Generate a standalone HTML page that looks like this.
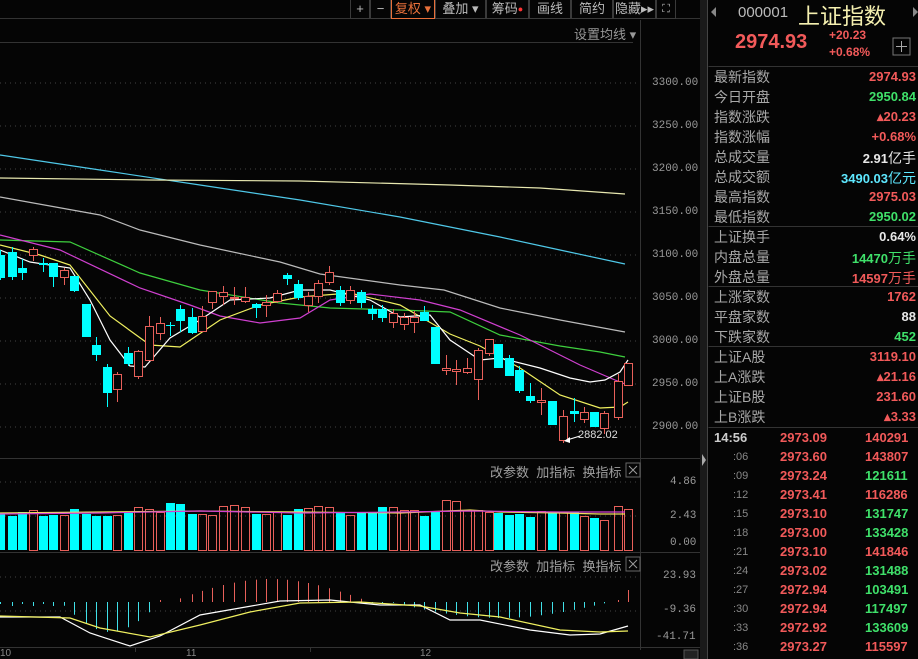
<!DOCTYPE html>
<html><head><meta charset="utf-8"><style>
*{margin:0;padding:0;box-sizing:border-box}
body{width:918px;height:659px;background:#050505;overflow:hidden;position:relative;font-family:"Liberation Sans","Noto Sans CJK SC",sans-serif;color:#aaa}
.a{position:absolute;white-space:nowrap}
.tb{position:absolute;top:0;height:19px;border:1px solid #3a3a3a;border-top:none;font-size:13px;line-height:18px;text-align:center;color:#bbb}
.lbl{position:absolute;left:714px;font-size:14px;color:#a8a8a8}
.val{position:absolute;right:2px;font-size:13px;font-weight:bold}
.r{color:#f25a5a}.g{color:#3fe06a}.w{color:#e8e8e8}
.ax{position:absolute;left:652px;font-size:11px;color:#9a9a9a;font-family:"Liberation Mono",monospace}
.ph{position:absolute;font-size:13px;color:#a0a0a0}
.tk{position:absolute;font-size:13px;font-weight:bold}
</style></head><body>
<svg class="a" style="left:0;top:0" width="918" height="659" id="s">
<g stroke="#444" stroke-dasharray="1,4" stroke-width="1">
<line x1="0" y1="83" x2="640" y2="83"/><line x1="0" y1="126" x2="640" y2="126"/><line x1="0" y1="169" x2="640" y2="169"/><line x1="0" y1="212" x2="640" y2="212"/><line x1="0" y1="255" x2="640" y2="255"/><line x1="0" y1="298" x2="640" y2="298"/><line x1="0" y1="341" x2="640" y2="341"/><line x1="0" y1="384" x2="640" y2="384"/><line x1="0" y1="427" x2="640" y2="427"/>
<line x1="0" y1="482" x2="640" y2="482"/><line x1="0" y1="516" x2="640" y2="516"/>
<line x1="0" y1="577" x2="640" y2="577"/><line x1="0" y1="611" x2="640" y2="611"/>
</g>
<g stroke="#333" stroke-width="1" fill="none">
<line x1="0" y1="42.5" x2="633" y2="42.5"/>
<line x1="640.5" y1="20" x2="640.5" y2="650"/>
<line x1="0" y1="458.5" x2="700" y2="458.5"/>
<line x1="0" y1="552.5" x2="700" y2="552.5"/>
<line x1="0" y1="647.5" x2="700" y2="647.5"/>
<line x1="0" y1="18.5" x2="700" y2="18.5"/>
<line x1="708.5" y1="66.5" x2="918" y2="66.5"/>
<line x1="708.5" y1="226.5" x2="918" y2="226.5"/>
<line x1="708.5" y1="286.5" x2="918" y2="286.5"/>
<line x1="708.5" y1="346.5" x2="918" y2="346.5"/>
<line x1="708.5" y1="427.5" x2="918" y2="427.5"/>
<line x1="135.5" y1="647" x2="135.5" y2="652"/><line x1="310.5" y1="647" x2="310.5" y2="652"/>
</g>
<rect x="700" y="0" width="8" height="659" fill="#1a1a1a"/>
<line x1="707.5" y1="0" x2="707.5" y2="659" stroke="#444"/>
<path d="M702 454 L706 460 L702 466Z" fill="#aaa"/>
<g fill="none" stroke-width="1.2">
<polyline stroke="#4fc8e8" points="0,155 100,170 200,185 300,200 400,217 500,237 560,250 625,264"/>
<polyline stroke="#e8e8b0" points="0,178 150,180 300,181 450,185 540,188 625,194"/>
<polyline stroke="#bbbbbb" points="0,197 100,215 140,230 200,245 280,262 320,274 400,285 444,290 500,308 560,320 625,332"/>
<polyline stroke="#3ecf3e" points="0,240 70,242 140,273 200,290 280,303 330,308 400,310 450,312 500,335 560,346 600,352 625,357"/>
<polyline stroke="#d040d0" points="0,235 60,250 140,288 190,305 220,316 260,323 300,318 330,300 370,294 420,300 460,310 520,335 580,365 615,380 625,384"/>
<polyline stroke="#f0f060" points="0,245 40,255 70,265 110,316 150,345 180,347 220,320 260,305 300,297 350,293 400,305 450,334 480,346 520,368 560,395 600,408 620,407 628,402"/>
<polyline stroke="#ffffff" points="0,250 30,262 70,268 90,300 110,340 130,366 145,367 170,338 200,320 230,300 270,298 300,290 330,290 370,300 400,317 430,315 450,340 480,360 500,358 540,368 570,378 590,382 605,380 620,372 628,360"/>
</g>
<g id="cd"></g>
<g fill="none" stroke-width="1.2">
<polyline stroke="#f0e060" points="0,513 100,512 200,511 300,512 400,513 470,510 500,512 560,513 600,514 625,514"/>
<polyline stroke="#d040d0" points="0,514 100,513 200,511 300,513 400,512 470,511 560,512 625,512"/>
<polyline stroke="#ffffff" points="0,617 60,617 90,633 130,646 160,636 200,615 240,608 280,601 330,600 380,605 420,605 450,620 480,620 530,630 570,635 600,634 628,626"/>
<polyline stroke="#f0f060" points="0,616 70,618 100,628 150,637 200,625 250,612 300,603 360,602 420,606 460,613 500,617 560,630 600,632 628,631"/>
</g>
<line x1="567" y1="440" x2="580" y2="436" stroke="#fff"/><path d="M564 441 L570 437 L570 443Z" fill="#fff"/>
<rect x="626" y="463" width="14" height="14" fill="none" stroke="#666"/>
<rect x="626" y="557" width="14" height="14" fill="none" stroke="#666"/>
<path d="M629 466 L637 474 M637 466 L629 474" stroke="#999"/><path d="M629 560 L637 568 M637 560 L629 568" stroke="#999"/>
<rect x="893" y="38" width="17" height="17" fill="none" stroke="#777"/><path d="M901.5 41 V52 M896 46.5 H907" stroke="#aaa"/>
<path d="M716 7 L711 12 L716 17Z" fill="#888"/><path d="M913 7 L918 12 L913 17Z" fill="#888"/>
<rect x="684" y="650" width="14" height="9" fill="#222" stroke="#555"/>
</svg>
<div class="tb" style="left:350px;width:20px">+</div>
<div class="tb" style="left:370px;width:21px">−</div>
<div class="tb" style="left:391px;width:44px;color:#e8703a;border-color:#e8703a">复权 ▾</div>
<div class="tb" style="left:435px;width:51px">叠加 ▾</div>
<div class="tb" style="left:486px;width:43px">筹码<span style="color:#f33;font-size:9px;vertical-align:top">●</span></div>
<div class="tb" style="left:529px;width:42px">画线</div>
<div class="tb" style="left:571px;width:42px">简约</div>
<div class="tb" style="left:613px;width:43px">隐藏▸▸</div>
<div class="tb" style="left:656px;width:20px;font-size:11px">⛶</div>
<div class="a" style="left:574px;top:24px;font-size:13px;color:#999">设置均线 ▾</div>
<div class="ax" style="top:77px">3300.00</div><div class="ax" style="top:120px">3250.00</div><div class="ax" style="top:163px">3200.00</div><div class="ax" style="top:206px">3150.00</div><div class="ax" style="top:249px">3100.00</div><div class="ax" style="top:292px">3050.00</div><div class="ax" style="top:335px">3000.00</div><div class="ax" style="top:378px">2950.00</div><div class="ax" style="top:421px">2900.00</div>
<div class="ax" style="top:476px;left:670px">4.86</div><div class="ax" style="top:510px;left:670px">2.43</div><div class="ax" style="top:537px;left:670px">0.00</div>
<div class="ax" style="top:570px;left:663px">23.93</div><div class="ax" style="top:604px;left:663px">-9.36</div><div class="ax" style="top:631px;left:656px">-41.71</div>
<div class="a" style="left:578px;top:429px;font-size:11px;color:#ddd">2882.02</div>
<div class="ph" style="left:490px;top:462px">改参数 &nbsp;加指标 &nbsp;换指标</div>
<div class="ph" style="left:490px;top:556px">改参数 &nbsp;加指标 &nbsp;换指标</div>
<div class="a" style="left:0;top:648px;font-size:10px;color:#888">10</div>
<div class="a" style="left:186px;top:648px;font-size:10px;color:#888">11</div>
<div class="a" style="left:420px;top:648px;font-size:10px;color:#888">12</div>
<div class="a" style="left:738px;top:4px;font-size:15px;color:#bbb">000001</div>
<div class="a" style="left:798px;top:-1px;font-size:22px;color:#f5f0b0">上证指数</div>
<div class="a r" style="left:735px;top:31px;font-size:20px;font-weight:bold">2974.93</div>
<div class="a r" style="left:829px;top:28px;font-size:12px;font-weight:bold">+20.23</div>
<div class="a r" style="left:829px;top:45px;font-size:12px;font-weight:bold">+0.68%</div>
<div class="lbl" style="top:67px">最新指数</div><div class="val r" style="top:69px">2974.93</div>
<div class="lbl" style="top:87px">今日开盘</div><div class="val g" style="top:89px">2950.84</div>
<div class="lbl" style="top:107px">指数涨跌</div><div class="val r" style="top:109px">▴20.23</div>
<div class="lbl" style="top:127px">指数涨幅</div><div class="val r" style="top:129px">+0.68%</div>
<div class="lbl" style="top:147px">总成交量</div><div class="val w" style="top:148px">2.91<span style="font-weight:normal;font-size:14px">亿手</span></div>
<div class="lbl" style="top:167px">总成交额</div><div class="val" style="top:168px;color:#5ee8ff">3490.03<span style="font-weight:normal;font-size:14px">亿元</span></div>
<div class="lbl" style="top:187px">最高指数</div><div class="val r" style="top:189px">2975.03</div>
<div class="lbl" style="top:207px">最低指数</div><div class="val g" style="top:209px">2950.02</div>
<div class="lbl" style="top:227px">上证换手</div><div class="val w" style="top:229px">0.64%</div>
<div class="lbl" style="top:247px">内盘总量</div><div class="val g" style="top:248px">14470<span style="font-weight:normal;font-size:14px">万手</span></div>
<div class="lbl" style="top:267px">外盘总量</div><div class="val r" style="top:268px">14597<span style="font-weight:normal;font-size:14px">万手</span></div>
<div class="lbl" style="top:287px">上涨家数</div><div class="val r" style="top:289px">1762</div>
<div class="lbl" style="top:307px">平盘家数</div><div class="val w" style="top:309px">88</div>
<div class="lbl" style="top:327px">下跌家数</div><div class="val g" style="top:329px">452</div>
<div class="lbl" style="top:347px">上证A股</div><div class="val r" style="top:349px">3119.10</div>
<div class="lbl" style="top:367px">上A涨跌</div><div class="val r" style="top:369px">▴21.16</div>
<div class="lbl" style="top:387px">上证B股</div><div class="val r" style="top:389px">231.60</div>
<div class="lbl" style="top:407px">上B涨跌</div><div class="val r" style="top:409px">▴3.33</div>
<div id="ticks"></div>
<script>
var ticks=[["14:56","2973.09","140291",1],[":06","2973.60","143807",1],[":09","2973.24","121611",0],[":12","2973.41","116286",1],[":15","2973.10","131747",0],[":18","2973.00","133428",0],[":21","2973.10","141846",1],[":24","2973.02","131488",0],[":27","2972.94","103491",0],[":30","2972.94","117497",0],[":33","2972.92","133609",0],[":36","2973.27","115597",1]];
var h="";ticks.forEach(function(t,i){var y=430+i*19;
h+='<div class="tk" style="top:'+y+'px;left:'+(i?733:714)+'px;color:'+(i?'#888':'#ccc')+';font-weight:'+(i?'normal':'bold')+';font-size:'+(i?11:13)+'px;'+(i?'margin-top:2px':'')+'">'+t[0]+'</div>';
h+='<div class="tk r" style="top:'+y+'px;left:780px">'+t[1]+'</div>';
h+='<div class="tk '+(t[3]?'r':'g')+'" style="top:'+y+'px;left:865px">'+t[2]+'</div>';});
document.getElementById("ticks").innerHTML=h;
var C=[[0,255,278,250,280,0],[12,252,277,247,280,0],[22,268,273,259,280,0],[33,249,255,247,261,1],[43,263,265,258,272,0],[53,263,277,263,287,0],[64,270,277,268,285,1],[74,276,291,276,292,0],[86,304,337,304,337,0],[96,345,355,337,361,0],[107,367,393,364,407,0],[117,374,389,372,402,1],[128,353,364,347,366,0],[138,351,376,350,379,1],[149,326,360,316,360,1],[160,323,333,317,340,1],[170,325,326,322,336,0],[180,309,321,305,332,0],[192,317,333,308,334,0],[202,316,331,306,331,1],[212,291,302,291,309,1],[223,292,296,286,305,1],[234,297,298,287,305,1],[245,297,301,287,303,1],[256,304,308,303,318,0],[266,302,305,295,317,1],[277,293,301,290,303,1],[287,275,279,273,285,0],[298,284,298,280,300,0],[308,296,305,292,312,1],[318,283,296,280,303,1],[329,272,282,266,285,1],[340,290,303,286,306,0],[350,290,300,286,304,1],[361,292,303,290,308,0],[372,309,314,305,320,0],[382,309,318,305,322,0],[393,313,322,309,328,1],[404,317,324,313,330,1],[414,317,322,311,333,1],[424,312,321,306,321,0],[435,327,364,327,364,0],[446,368,370,355,375,1],[456,369,371,360,385,1],[467,368,372,358,374,1],[478,350,379,348,400,1],[489,339,353,339,356,1],[498,344,368,344,368,0],[509,358,376,355,376,0],[519,370,391,366,393,0],[530,396,401,383,403,0],[541,400,402,388,415,1],[552,401,425,401,425,0],[563,416,440,410,443,1],[574,411,414,398,422,0],[584,412,419,407,423,1],[594,412,427,412,427,0],[604,413,428,411,434,1],[618,381,417,374,420,1],[628,363,385,363,385,1]];
var vt=[514,516,512,510,516,515,515,509,514,516,516,515,512,507,509,512,503,504,514,514,515,506,505,507,514,514,512,515,509,508,506,507,512,515,513,513,507,507,510,510,516,512,500,501,510,510,512,513,515,514,517,511,512,512,512,516,518,520,506,509];
var s="";C.forEach(function(c,i){var col=c[5]?"#e8605a":"#00ffff";
s+='<line x1="'+(c[0]+.5)+'" y1="'+c[3]+'" x2="'+(c[0]+.5)+'" y2="'+c[4]+'" stroke="'+col+'"/>';
var hh=Math.max(1,c[2]-c[1]);
if(c[5])s+='<rect x="'+(c[0]-3.5)+'" y="'+(c[1]+.5)+'" width="8" height="'+hh+'" fill="#050505" stroke="'+col+'"/>';
else s+='<rect x="'+(c[0]-4)+'" y="'+c[1]+'" width="9" height="'+hh+'" fill="'+col+'"/>';
var v=vt[i]||512;
if(c[5])s+='<rect x="'+(c[0]-3.5)+'" y="'+(v+.5)+'" width="8" height="'+(550-v)+'" fill="none" stroke="'+col+'"/>';
else s+='<rect x="'+(c[0]-4)+'" y="'+v+'" width="9" height="'+(550-v)+'" fill="'+col+'"/>';
var m;var x=c[0];
if(x<60)m=602+(x%20<10?2:4);else if(x<160)m=602+Math.sin((x-60)/100*Math.PI)*30;else if(x<170)m=600;
else if(x<370)m=602-Math.sin((x-170)/200*Math.PI)*23;else if(x<390)m=603;else if(x<610)m=602+Math.sin((x-390)/220*Math.PI)*16;else m=x>620?590:600;
var mc=m<602?"#e8605a":"#40e0e8";
s+='<line x1="'+(x+.5)+'" y1="602" x2="'+(x+.5)+'" y2="'+m.toFixed(1)+'" stroke="'+mc+'"/>';
});
document.getElementById("cd").innerHTML=s;
</script>
</body></html>
